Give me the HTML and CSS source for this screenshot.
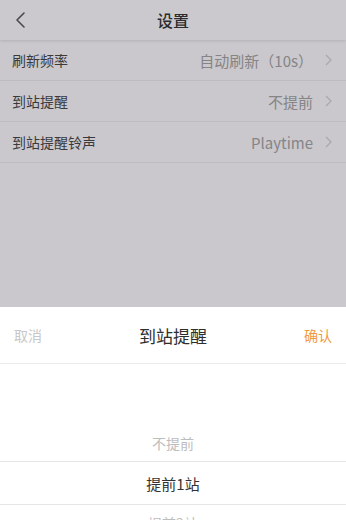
FILE: index.html
```html
<!DOCTYPE html>
<html lang="zh">
<head>
<meta charset="utf-8">
<link rel="stylesheet" href="styles.css">
</head>
<body>
<div class="page">
  <header class="nav">
    <svg class="back" width="12" height="18" viewBox="0 0 12 18"><path d="M10 2 L3 9 L10 16" fill="none" stroke="#4a4a4c" stroke-width="1.6" stroke-linecap="round" stroke-linejoin="round"/></svg>
    <div class="nav-title">设置</div>
  </header>
  <ul class="list">
    <li class="row"><span class="label">刷新频率</span><span class="value">自动刷新（10s）</span><svg class="chev" width="7" height="12" viewBox="0 0 7 12"><path d="M1 1 L6 6 L1 11" fill="none" stroke="#a9a7ab" stroke-width="1.2"/></svg></li>
    <li class="row"><span class="label">到站提醒</span><span class="value">不提前</span><svg class="chev" width="7" height="12" viewBox="0 0 7 12"><path d="M1 1 L6 6 L1 11" fill="none" stroke="#a9a7ab" stroke-width="1.2"/></svg></li>
    <li class="row"><span class="label">到站提醒铃声</span><span class="value">Playtime</span><svg class="chev" width="7" height="12" viewBox="0 0 7 12"><path d="M1 1 L6 6 L1 11" fill="none" stroke="#a9a7ab" stroke-width="1.2"/></svg></li>
  </ul>
  <div class="spacer"></div>
  <section class="sheet">
    <div class="sheet-head">
      <span class="cancel">取消</span>
      <span class="sheet-title">到站提醒</span>
      <span class="ok">确认</span>
    </div>
    <div class="picker">
      <div class="opt dim">不提前</div>
      <div class="opt sel">提前1站</div>
      <div class="opt dim">提前2站</div>
    </div>
  </section>
</div>
</body>
</html>
```
FILE: styles.css
```css
* { box-sizing: border-box; }
html, body { margin: 0; padding: 0; }
body {
  font-family: "Noto Sans CJK SC", "Noto Sans", sans-serif;
  background: #cac8cc;
  width: 346px;
  height: 520px;
  overflow: hidden;
}
.page {
  display: flex;
  flex-direction: column;
  height: 520px;
}
.nav {
  height: 40px;
  flex: none;
  display: flex;
  align-items: center;
  justify-content: center;
  position: relative;
  background: #cbc9cd;
  box-shadow: 0 1px 3px rgba(0,0,0,0.12);
  z-index: 1;
}
.back {
  position: absolute;
  left: 14px;
  top: 11px;
}
.nav-title {
  font-size: 16px;
  color: #2c2c2e;
  font-weight: 500;
}
.list {
  list-style: none;
  margin: 0;
  padding: 0;
}
.row {
  height: 41px;
  display: flex;
  align-items: center;
  padding: 0 14px 0 12px;
  border-bottom: 1px solid #bebcc0;
}
.label {
  font-size: 14px;
  color: #3a3a3c;
  flex: 1;
}
.value {
  font-size: 15px;
  color: #858487;
}
.chev {
  margin-left: 12px;
  flex: none;
}
.spacer { flex: 1; }
.sheet {
  height: 213px;
  flex: none;
  background: #fff;
  overflow: hidden;
}
.sheet-head {
  height: 57px;
  display: flex;
  align-items: center;
  justify-content: space-between;
  padding: 0 14px;
  border-bottom: 1px solid #ebebeb;
}
.cancel {
  font-size: 14px;
  color: #c8c8c8;
}
.sheet-title {
  font-size: 17px;
  color: #2e2e2e;
}
.ok {
  font-size: 14px;
  color: #f09a3e;
}
.picker {
  padding-top: 61px;
}
.opt {
  height: 36px;
  display: flex;
  align-items: center;
  justify-content: center;
  font-size: 14px;
}
.opt.dim { color: #bdbdbd; }
.opt.sel {
  height: 44px;
  color: #333;
  font-size: 15px;
  border-top: 1px solid #e6e6e6;
  border-bottom: 1px solid #e6e6e6;
}
```
